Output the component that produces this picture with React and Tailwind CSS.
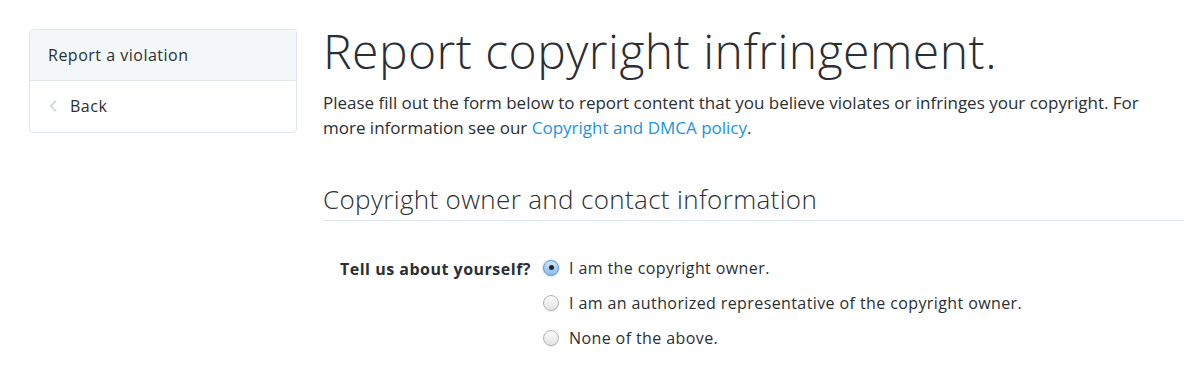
import { ChevronLeft } from 'lucide-react';

const font = { fontFamily: '"Open Sans", "Liberation Sans", sans-serif' };

function Radio({ checked }) {
  return checked ? (
    <span className="flex h-[16px] w-[16px] shrink-0 items-center justify-center rounded-full border border-[#5b9ad6] bg-gradient-to-b from-[#cfe4f8] to-[#8cbcea] shadow-[0_0_2px_#7fb3e8]">
      <span className="h-[5px] w-[5px] rounded-full bg-[#1c2a38]" />
    </span>
  ) : (
    <span className="h-[16px] w-[16px] shrink-0 rounded-full border border-[#b4b4b4] bg-gradient-to-b from-[#fdfdfd] to-[#e2e2e2] shadow-[0_1px_1px_rgba(0,0,0,0.08)]" />
  );
}

export default function App() {
  const options = [
    { label: 'I am the copyright owner.', checked: true },
    { label: 'I am an authorized representative of the copyright owner.', checked: false },
    { label: 'None of the above.', checked: false },
  ];

  return (
    <div className="min-h-[367px] bg-white text-[#292f33]" style={font}>
      <div className="flex gap-[26px] pl-[29px] pt-[29px]">
        {/* sidebar */}
        <div className="w-[268px] shrink-0">
          <div className="overflow-hidden rounded border border-[#e1e8ed] bg-white">
            <div className="flex h-[51px] items-center border-b border-[#e1e8ed] bg-[#f5f8fa] px-[18px] pb-[1px] text-[16px] tracking-[0.5px]">
              Report a violation
            </div>
            <div className="flex h-[51px] items-center px-[14px] pb-[1px] text-[16px] tracking-[0.5px]">
              <ChevronLeft className="mr-[8px] h-[18px] w-[18px] text-[#d3dde4]" strokeWidth={3} />
              Back
            </div>
          </div>
        </div>

        {/* main */}
        <div className="flex-1 pr-[16px]">
          <h1 className="-mt-[6px] text-[48px] font-light leading-[56px] tracking-[0.5px]">
            Report copyright infringement.
          </h1>
          <p className="mt-[11px] max-w-[830px] text-[17px] leading-[25px] tracking-[0px]">
            Please fill out the form below to report content that you believe violates or infringes your copyright. For
            more information see our{' '}
            <a href="#" className="text-[#1b95e0]">Copyright and DMCA policy</a>.
          </p>

          <h2 className="mt-[42px] border-b border-[#e1e8ed] pb-[4px] text-[26px] font-light leading-[34px] tracking-[0.35px]">
            Copyright owner and contact information
          </h2>

          <div className="mt-[34px] flex">
            <div className="w-[220px] pl-[17px] pt-[2px] text-[16px] font-bold tracking-[0.5px]">Tell us about yourself?</div>
            <div className="flex flex-col gap-[10px]">
              {options.map((o) => (
                <label key={o.label} className="flex h-[25px] items-center gap-[10px] text-[16px] tracking-[0.4px]">
                  <Radio checked={o.checked} />
                  {o.label}
                </label>
              ))}
            </div>
          </div>
        </div>
      </div>
    </div>
  );
}
